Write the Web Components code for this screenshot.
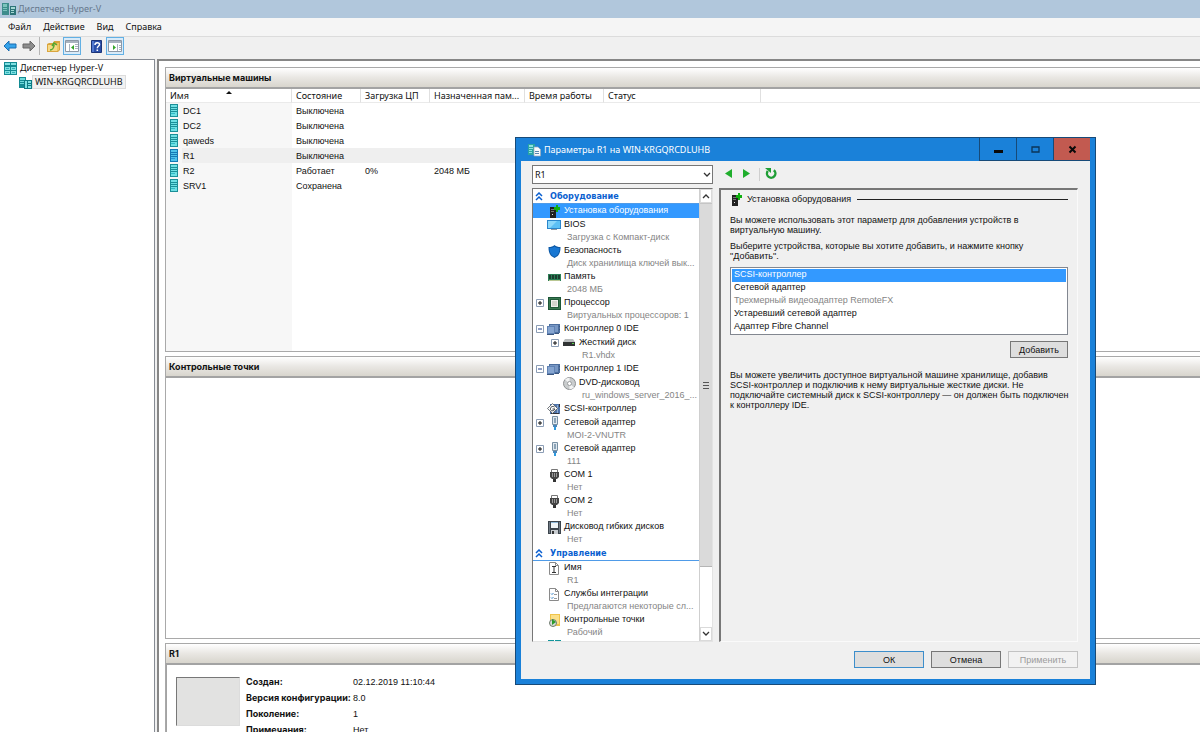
<!DOCTYPE html>
<html lang="ru">
<head>
<meta charset="utf-8">
<title>Диспетчер Hyper-V</title>
<style>
  html, body { margin: 0; height: 100%; background: #fff; }
  body {
    --ui: "Noto Sans", "Open Sans", sans-serif;
    --strong: Inter, "Noto Sans", sans-serif;
    --small: "Liberation Sans", Arial, sans-serif;
    --accent: #1a81d9;
    --select: #3399ff;
    font: 9px/12px var(--ui);
    color: #111;
    overflow: hidden;
  }
</style>
</head>
<body>
<hv-manager></hv-manager>
<script>
const ICONS = {
  app: [16, 14, '<path fill="#3d8c8c" d="M1 1h7v12H1z"/><path fill="#7cc3bd" d="M2 2h4v3H2zM2 6h4v1H2zM2 8h4v1H2z"/><path fill="#2d7377" d="M9 4h6v9H9z"/><path fill="#a5d8d3" d="M10 5h4v2h-4zM10 8h3v1h-3zM10 10h3v1h-3z"/>'],
  console: [13, 13, '<path fill="#138b93" d="M0 0h13v13H0z"/><path fill="#7fe0e2" d="M1 1h5v2H1zM7 1h5v2H7zM1 5h5v3H1zM7 5h5v3H7zM1 9h5v3H1zM7 9h5v3H7z"/><path fill="#2fb2b8" d="M2 6h3v1H2zM8 6h3v1H8zM2 10h3v1H2zM8 10h3v1H8z"/>'],
  host: [13, 13, '<path fill="#138b93" d="M0 1h7v11H0z"/><path fill="#6fd9db" d="M1 2h5v2H1zM1 5h5v1H1zM1 7h5v1H1z"/><path fill="#0e7b84" d="M5 4h8v9H5z"/><path fill="#7fe0e2" d="M6 5h2v7H6zM9 5h3v2H9zM9 8h3v1H9zM9 10h3v2H9z"/>'],
  vm: [8, 13, '<path fill="#1b8f98" d="M0 0h8v13H0z"/><path fill="#6fe0e4" d="M1 1h6v2H1zM1 4h6v1H1zM1 6h6v1H1zM1 8h6v4H1z"/><path fill="#31b9c4" d="M1 9h4v1H1z"/>'],
  vmsel: [8, 13, '<path fill="#1478b4" d="M0 0h8v13H0z"/><path fill="#4ec3ea" d="M1 1h6v2H1zM1 4h6v1H1zM1 6h6v1H1zM1 8h6v4H1z"/><path fill="#2494d4" d="M1 9h4v1H1z"/>'],
  back: [14, 12, '<path fill="#35a3ea" stroke="#1b6cb0" d="M1 6l5-5v3h7v4H6v3z"/>'],
  forward: [14, 12, '<path fill="#8d8d8d" stroke="#666" d="M13 6L8 1v3H1v4h7v3z"/>'],
  folder: [13, 12, '<path fill="#d9a53e" d="M0 4l2-1h4l1-2h6v9l-2 2H0z"/><path fill="#f6d987" d="M1 5h9v6H1z"/><path fill="#edc561" d="M10 3h2v7l-2 1z"/><path fill="none" stroke="#4faa32" stroke-width="1.500" d="M3 10c2 0 4-2 4-5M5 6l2-3 3 2"/>'],
  paneleft: [14, 12, '<path fill="#fff" stroke="#8c98a6" d="M.5.5h13v11H.5z"/><path fill="#a9b3bf" d="M1 1h12v2H1zM4 4h1v7H4zM10 4h3v1h-3zM10 6h3v1h-3zM10 8h3v1h-3z"/><path fill="#35a52a" d="M9 5v5L6 7.500z"/>'],
  paneright: [14, 12, '<path fill="#fff" stroke="#8c98a6" d="M.5.5h13v11H.5z"/><path fill="#a9b3bf" d="M1 1h12v2H1zM9 4h1v7H9zM11 5h2v1h-2zM11 7h2v1h-2zM11 9h2v1h-2z"/><path fill="#35a52a" d="M5 5v5l3-2.500z"/>'],
  help: [11, 13, '<path fill="#2a4ea8" stroke="#1b3479" d="M.5.5h10v12H.5z"/><path fill="#5078cf" d="M1 1h2v11H1z"/><path fill="none" stroke="#fff" stroke-width="1.500" d="M4 5c0-3 4.500-3 4.500-.5C8.500 6 6.300 6 6.300 8.300"/><path fill="#fff" d="M5.500 9.500h1.600V11H5.500z"/>'],
  settings: [13, 14, '<path fill="#2aa5a5" d="M0 1h7v11H0z"/><path fill="#8de2df" d="M1 2h4v2H1zM1 5h4v1H1zM1 7h3v1H1zM1 9h3v1H1z"/><path fill="#f6f9fc" stroke="#9aabba" stroke-width=".7" d="M6 4h4l2.500 2.500V13H6z"/><path fill="#5a86b0" d="M7 8h4v1H7zM7 10h4v1H7z"/>'],
  hardware: [13, 13, '<path fill="#222" d="M2 2h6v11H2z"/><path fill="#777" d="M3 4h3v1H3zM3 6h3v1H3z"/><path fill="#e8e8e8" d="M4 9h1v1H4z"/><path fill="#10b010" d="M8 0h2v2h2v3h-2v2H8V5H6V2h2z"/>'],
  bios: [14, 11, '<path fill="#2a86cc" d="M0 0h14v9H0z"/><path fill="#5cc0f5" d="M1 1h12v7H1z"/><path fill="#8cd8fb" d="M1 1h9L3 8H1z"/><path fill="#8f9aa3" d="M4 9h6v1H4z"/>'],
  shield: [13, 13, '<path fill="#0b57a4" d="M6.500 0C8 1.500 10 2 12.500 2c0 5-.8 8.500-6 11C1.300 10.500.5 7 .5 2 3 2 5 1.500 6.500 0z"/><path fill="#1877d2" d="M6.500 1.500C8 2.600 9.700 3 11.500 3c0 4-.8 6.800-5 8.800C2.300 9.800 1.500 7 1.500 3c1.800 0 3.500-.4 5-1.500z"/>'],
  memory: [13, 9, '<path fill="#2c7e55" d="M0 1h13v7H0z"/><path fill="#1c3d30" d="M1 2h2v4H1zM4 2h2v4H4zM7 2h2v4H7zM10 2h2v4h-2z"/><path fill="#b9c793" d="M1 7h11v1H1z"/>'],
  cpu: [13, 13, '<path fill="#1c5537" d="M0 0h13v13H0z"/><path fill="#39784f" d="M1 1h11v11H1z"/><path fill="#1f5a38" d="M2 2h9v9H2z"/><path fill="#f0f0ec" d="M3 3h7v7H3z"/><path fill="#d3d5cd" d="M4 4h5v5H4z"/>'],
  ide: [14, 12, '<path fill="#4d6f9f" d="M2 1h11v9H2z"/><path fill="#7897c4" d="M3 2h8v7H3z"/><path fill="#5f82b4" d="M0 3h8v8H0z"/><path fill="#86a5d0" d="M1 4h6v6H1z"/><path fill="#3a567f" d="M8 10h4v1H8zM12 3h1v1h-1zM12 6h1v1h-1zM0 11h7v1H0z"/>'],
  hdd: [12, 8, '<path fill="#b9bcbd" d="M2 0h8l2 3H0z"/><path fill="#303334" d="M0 3h12v4H0z"/><path fill="#56d04b" d="M9 4h2v1H9z"/>'],
  dvd: [13, 13, '<circle cx="6.500" cy="6.500" r="6" fill="#c9cccd" stroke="#8e9192"/><path fill="#f3f4f4" d="M6.500 6.500L2 2.500A6 6 0 0 1 6.500.8zM6.500 6.500L11 10.500a6 6 0 0 1-4.500 1.700z"/><circle cx="6.500" cy="6.500" r="2" fill="#fff" stroke="#9b9e9f"/>'],
  scsi: [14, 12, '<path fill="#4f74ab" d="M3 1h10v10H3z"/><path fill="#8faed4" d="M10 2h1v8h-1z"/><path fill="#30343a" d="M12 1h1v3h-1zM4 10h8v1H4z"/><path fill="#fff" stroke="#4a5058" stroke-width=".8" d="M5.500.6l5 4.900-5 4.900-5-4.900z"/><path fill="none" stroke="#33383e" d="M7.500 4C5 2.500 3 4.500 3.500 6.500S7 8 8 6H5.500"/>'],
  net: [9, 14, '<path fill="#dfe8ef" stroke="#7890a4" d="M2.500.5h5v8h-5z"/><path fill="#8ba3b7" d="M4 2h2v5H4z"/><path fill="#4b86b8" d="M3 9h4v2H3z"/><path fill="#2d9ae0" d="M4 11h2v3H4z"/>'],
  com: [11, 13, '<path fill="#fff" stroke="#777" d="M2.500.5h6v3h-6z"/><path fill="#444" d="M1 3h9v5l-2 2H3L1 8z"/><path fill="#999" d="M3 4h1v4H3zM5 4h1v4H5zM7 4h1v4H7z"/><path fill="#333" d="M4 10h3v3H4z"/>'],
  floppy: [13, 13, '<path fill="#3c444c" d="M0 0h13v13H0z"/><path fill="#707a84" d="M1 1h1v11H1zM11 1h1v11h-1z"/><path fill="#eef3f6" d="M3 1h7v6H3z"/><path fill="#8fb8d8" d="M3 1h7v1H3z"/><path fill="#c8ccd0" d="M3 9h7v4H3z"/><path fill="#333" d="M4 10h2v3H4z"/>'],
  name: [10, 13, '<path fill="#fff" stroke="#8a8a8a" d="M.5.5h6l3 3v9h-9z"/><path fill="none" stroke="#8a8a8a" d="M6.500.5v3h3"/><path fill="none" stroke="#333" d="M3 4.500h4M3 10.500h4M5 4.500v6"/>'],
  services: [10, 13, '<path fill="#fff" stroke="#8a8a8a" d="M.5.5h6l3 3v9h-9z"/><path fill="none" stroke="#8a8a8a" d="M6.500.5v3h3"/><path fill="none" stroke="#3a86c8" d="M2 5.500l1 1L4.500 5M2 9.500l1 1L4.500 9"/><path fill="#999" d="M5 6h3v1H5zM5 10h3v1H5z"/>'],
  checkpoint: [12, 13, '<path fill="#f0c44a" d="M2 0h10v12H2z"/><path fill="#fbe08a" d="M3 1h8v9H3z"/><circle cx="5" cy="9" r="3.500" fill="#d8dcd8" stroke="#6e7a6e"/><path fill="#2b9b2b" d="M4 5l4 3-4 3z"/>'],
  paging: [13, 13, '<path fill="#12959b" d="M0 0h6v12H0zM7 0h6v12H7z"/><path fill="#7fe0e2" d="M1 3h4v2H1zM8 3h4v2H8z"/>'],
  prev: [8, 9, '<path fill="#1fae2c" d="M7 0v9L0 4.500z"/>'],
  next: [8, 9, '<path fill="#1fae2c" d="M1 0v9l7-4.500z"/>'],
  refresh: [12, 12, '<path fill="none" stroke="#1f9e35" stroke-width="2.400" d="M2.800 4A4.200 4.200 0 1 0 8.800 3.200"/><path fill="#1f9e35" d="M0 1h6v5z"/>'],
  chevdown: [8, 6, '<path fill="none" stroke="#333" stroke-width="1.300" d="M1 1l3 3 3-3"/>'],
  chevup: [8, 6, '<path fill="none" stroke="#333" stroke-width="1.300" d="M1 5l3-3 3 3"/>'],
  collapse: [8, 9, '<path fill="none" stroke="#0a5fd0" stroke-width="1.500" d="M1 4l3-3 3 3M1 8l3-3 3 3"/>'],
  plus: [8, 8, '<path fill="#fff" stroke="#8b9db5" d="M.5.5h7v7h-7z"/><path fill="#111" d="M2 3.500h4v1H2zM3.500 2h1v4h-1z"/>'],
  minus: [8, 8, '<path fill="#fff" stroke="#8b9db5" d="M.5.5h7v7h-7z"/><path fill="#1c3d8a" d="M2 3.500h4v1H2z"/>'],
  min: [9, 9, '<path fill="#0a0a0a" d="M0 5h9v3H0z"/>'],
  max: [9, 9, '<path fill="none" stroke="#0b3558" stroke-width="1.300" d="M1 2h7v5H1z"/>'],
  close: [9, 9, '<path fill="none" stroke="#0a0a0a" stroke-width="2" d="M1.500 1.500l6 6M7.500 1.500l-6 6"/>'],
  sort: [6, 3, '<path fill="#111" d="M3 0l3 3H0z"/>']
};

const define = (name, css, html, setup) => {
  const tpl = document.createElement('template');
  tpl.innerHTML = `<style>*{box-sizing:border-box}${css}</style>${html}`;
  customElements.define(name, class extends HTMLElement {
    constructor() {
      super();
      this.attachShadow({ mode: 'open' }).append(tpl.content.cloneNode(true));
    }
    connectedCallback() {
      if (setup && !this.ready) { this.ready = true; setup(this, this.shadowRoot); }
    }
  });
};

define('hv-icon', `:host{display:inline-block;flex:none;line-height:0} svg{display:block}`, `<span></span>`, (el, root) => {
  const [w, h, body] = ICONS[el.getAttribute('name')];
  root.querySelector('span').innerHTML = `<svg width="${w}" height="${h}" viewBox="0 0 ${w} ${h}" aria-hidden="true">${body}</svg>`;
});

define('hv-titlebar', `
  :host{display:flex;align-items:center;gap:1px;height:18px;padding-left:1px;background:#b1c7dc;color:#66788c}`,
  `<hv-icon name="app"></hv-icon><slot></slot>`);

define('hv-menubar', `
  :host{display:block;background:#f5f5f5;border-bottom:1px solid #dcdcdc}
  nav{display:flex;gap:12px;height:18px;padding-left:8px;align-items:center}
  button{all:unset;line-height:12px}`,
  `<nav><button>Файл</button><button>Действие</button><button>Вид</button><button>Справка</button></nav>`);

define('hv-toolbar', `
  :host{display:flex;align-items:flex-start;height:22px;padding-left:1px;gap:1px;background:#f0f0f0}
  button{all:unset;display:grid;place-items:center;width:18px;height:18px}
  button[aria-pressed]{background:#d9ebf9;box-shadow:inset 0 0 0 1px #62b0e4}
  i{width:1px;height:18px;background:#b5b5b5;margin-right:3px}
  .gap{margin-left:5px}`,
  `<button aria-label="Назад"><hv-icon name="back"></hv-icon></button>
   <button aria-label="Вперед"><hv-icon name="forward"></hv-icon></button><i></i>
   <button aria-label="Вверх"><hv-icon name="folder"></hv-icon></button>
   <button aria-label="Дерево консоли" aria-pressed="true"><hv-icon name="paneleft"></hv-icon></button>
   <button aria-label="Справка" class="gap"><hv-icon name="help"></hv-icon></button>
   <button aria-label="Действия" aria-pressed="true"><hv-icon name="paneright"></hv-icon></button>`);

define('hv-console-tree', `
  :host{display:block;background:#fff;border:1px solid #868b93;border-left:0;border-bottom:0;padding:1px 0 0 4px}
  ul{list-style:none;margin:0;padding:0}
  li{display:flex;align-items:center;gap:3px;height:14px}
  .child{padding-left:15px;gap:0}
  .child span{background:#f2f2f2;border:1px solid #dcdcdc;padding:0 2px}`,
  `<ul role="tree">
    <li role="treeitem"><hv-icon name="console"></hv-icon><span>Диспетчер Hyper-V</span></li>
    <li role="treeitem" class="child"><hv-icon name="host"></hv-icon><span>WIN-KRGQRCDLUHB</span></li>
  </ul>`);

define('hv-panel', `
  :host{display:flex;flex-direction:column;min-height:0;border:1px solid #a9a9a9;border-right:0;background:#fff}
  :host([last]){border-bottom:0}
  h2{flex:none;margin:0;height:21px;padding-left:3px;font:bold 9px/20px var(--strong);color:#111;
     background:linear-gradient(#fff,#e9e7e3 50%,#d8d5cd);border-bottom:2px solid #a3a3a3}
  div{flex:1;min-height:0;overflow:hidden}`,
  `<h2></h2><div><slot></slot></div>`,
  (el, root) => { root.querySelector('h2').textContent = el.getAttribute('heading'); });

define('hv-vm-table', `
  :host{display:block;height:100%;background:linear-gradient(#f7f7f7,#f7f7f7) 0 0/126px 100% no-repeat}
  table{width:100%;table-layout:fixed;border-spacing:0}
  th{position:relative;height:14px;padding:0 4px;font-weight:normal;line-height:13px;text-align:left;white-space:nowrap;
     background:#fff;border-right:1px solid #e0e0e0;border-bottom:1px solid #eaeaea}
  th:last-child{border-right:0}
  th hv-icon{position:absolute;left:60px;top:2px}
  td{height:15px;padding:0 4px;line-height:12px;white-space:nowrap;font-family:var(--small)}
  td span{display:flex;align-items:center;gap:5px}
  tr[aria-selected] td{background:#efefef}
  tr[aria-selected] td:first-child{background:linear-gradient(90deg,#f7f7f7 16px,#efefef 16px)}
  tr[aria-selected] td:last-child{background:none}`,
  `<table>
    <colgroup><col style="width:126px"><col style="width:69px"><col style="width:69px"><col style="width:95px"><col style="width:79px"><col style="width:157px"><col></colgroup>
    <thead><tr><th>Имя<hv-icon name="sort"></hv-icon></th><th>Состояние</th><th>Загрузка ЦП</th><th>Назначенная пам...</th><th>Время работы</th><th>Статус</th><th></th></tr></thead>
    <tbody></tbody></table>`,
  (el, root) => {
    const rows = [['DC1', 'Выключена'], ['DC2', 'Выключена'], ['qaweds', 'Выключена'], ['R1', 'Выключена'], ['R2', 'Работает', '0%', '2048 МБ'], ['SRV1', 'Сохранена']];
    root.querySelector('tbody').innerHTML = rows.map(r => {
      const sel = r[0] === 'R1';
      return `<tr${sel ? ' aria-selected="true"' : ''}><td><span><hv-icon name="${sel ? 'vmsel' : 'vm'}"></hv-icon>${r[0]}</span></td>` +
        [1, 2, 3, 4, 5, 6].map(i => `<td>${r[i] || ''}</td>`).join('') + '</tr>';
    }).join('');
  });

define('hv-vm-details', `
  :host{display:flex;gap:6px;padding:12px 0 0 9px;border-left:1px solid #a3a3a3}
  .thumb{width:64px;height:49px;flex:none;background:#e2e2e1;border:1px solid #dcdcdc;border-top-color:#777;border-left-color:#777}
  dl{margin:-3px 0 0;display:grid;grid-template-columns:107px auto;grid-auto-rows:16px;line-height:16px}
  dt{font-family:var(--strong);font-weight:bold;white-space:nowrap} dd{margin:0;font-family:var(--small)}`,
  `<div class="thumb"></div><dl>
    <dt>Создан:</dt><dd>02.12.2019 11:10:44</dd><dt>Версия конфигурации:</dt><dd>8.0</dd>
    <dt>Поколение:</dt><dd>1</dd><dt>Примечания:</dt><dd>Нет</dd></dl>`);

define('hv-scrollbar', `
  :host{display:flex;flex-direction:column;width:13px;background:#fff;border-left:1px solid #cfcfcf}
  button{all:unset;display:grid;place-items:center;height:14px;flex:none;box-shadow:inset 0 0 0 1px #dadada}
  .thumb{flex:365;background:#dadada;border-bottom:1px solid #b5b5b5;border-top:1px solid #c5c5c5;display:grid;place-items:center}
  .thumb i{width:6px;height:7px;background:repeating-linear-gradient(#555 0 1px,transparent 1px 3px)}
  .rest{flex:60}`,
  `<button aria-label="Вверх"><hv-icon name="chevup"></hv-icon></button><div class="thumb"><i></i></div><div class="rest"></div>
   <button aria-label="Вниз"><hv-icon name="chevdown"></hv-icon></button>`);

define('hv-section', `
  :host{display:flex;align-items:center;gap:7px;height:15px;padding-left:2px;border-bottom:1px solid #4f9be8;
    font:bold 9px/14px "DejaVu Sans Condensed","DejaVu Sans",sans-serif;color:#0a5fd0}`,
  `<hv-icon name="collapse"></hv-icon><slot></slot>`);

define('hv-setting', `
  :host{display:block;padding-left:3px;white-space:nowrap}
  :host([level="2"]){padding-left:18px}
  :host([selected]){background:var(--select);color:#fff}
  .row{display:grid;grid-template-columns:8px 14px auto;column-gap:3px;align-items:center;height:14px}
  .exp,.ico{line-height:0}
  .ico{justify-self:center}
  .text{align-self:start;line-height:13px}
  button{all:unset;display:block;height:8px}
  .sub{display:none;height:12px;line-height:11px;padding-left:31px;color:#858585;overflow:hidden}
  :host([note]) .sub{display:block}`,
  `<div class="row"><span class="exp"></span><span class="ico"></span><span class="text"><slot></slot></span></div><div class="sub"></div>`,
  (el, root) => {
    const e = el.getAttribute('expander');
    if (e) root.querySelector('.exp').innerHTML = `<button aria-label="${e === 'plus' ? 'Развернуть' : 'Свернуть'}"><hv-icon name="${e}"></hv-icon></button>`;
    root.querySelector('.ico').innerHTML = `<hv-icon name="${el.getAttribute('icon')}"></hv-icon>`;
    root.querySelector('.sub').textContent = el.getAttribute('note') || '';
  });

define('hv-settings-tree', `
  :host{display:flex;min-height:0;background:#fff;border:1px solid #777;border-right-color:#e3e3e3;border-bottom-color:#e3e3e3}
  .list{flex:1;min-width:0;overflow:hidden}`,
  `<div class="list">
    <hv-section>Оборудование</hv-section>
    <hv-setting icon="hardware" selected>Установка оборудования</hv-setting>
    <hv-setting icon="bios" note="Загрузка с Компакт-диск">BIOS</hv-setting>
    <hv-setting icon="shield" note="Диск хранилища ключей вык...">Безопасность</hv-setting>
    <hv-setting icon="memory" note="2048 МБ">Память</hv-setting>
    <hv-setting icon="cpu" expander="plus" note="Виртуальных процессоров: 1">Процессор</hv-setting>
    <hv-setting icon="ide" expander="minus">Контроллер 0 IDE</hv-setting>
    <hv-setting icon="hdd" level="2" expander="plus" note="R1.vhdx">Жесткий диск</hv-setting>
    <hv-setting icon="ide" expander="minus">Контроллер 1 IDE</hv-setting>
    <hv-setting icon="dvd" level="2" note="ru_windows_server_2016_...">DVD-дисковод</hv-setting>
    <hv-setting icon="scsi">SCSI-контроллер</hv-setting>
    <hv-setting icon="net" expander="plus" note="MOI-2-VNUTR">Сетевой адаптер</hv-setting>
    <hv-setting icon="net" expander="plus" note="111">Сетевой адаптер</hv-setting>
    <hv-setting icon="com" note="Нет">COM 1</hv-setting>
    <hv-setting icon="com" note="Нет">COM 2</hv-setting>
    <hv-setting icon="floppy" note="Нет">Дисковод гибких дисков</hv-setting>
    <hv-section>Управление</hv-section>
    <hv-setting icon="name" note="R1">Имя</hv-setting>
    <hv-setting icon="services" note="Предлагаются некоторые сл...">Службы интеграции</hv-setting>
    <hv-setting icon="checkpoint" note="Рабочий">Контрольные точки</hv-setting>
    <hv-setting icon="paging"></hv-setting>
  </div><hv-scrollbar></hv-scrollbar>`);

const BUTTON = `button{font:9px/12px var(--small);color:#111;height:17px;padding:0;border:1px solid #777;border-radius:0;background:#dedede}`;

define('hv-add-hardware', `
  :host{display:block;min-width:0;padding:2px 9px 0;border:1px solid #777;border-width:2px 1px 1px 2px;border-right-color:#fafafa;border-bottom-color:#fafafa}
  h3{display:flex;align-items:center;gap:4px;margin:0 0 9px;font:inherit;height:14px}
  h3 i{flex:1;height:1px;background:#222;margin-left:2px}
  p{margin:0 0 6px;line-height:10px;white-space:nowrap}
  select{display:block;width:100%;height:68px;margin:0 0 6px;padding:1px;border:1px solid #828790;border-radius:0;background:#fff;
    font:9px/13px var(--small);color:#111;overflow:hidden;outline:0}
  option{height:13px;min-height:13px;padding:0 2px;line-height:13px;font-size:9px}
  option:checked{background-image:linear-gradient(#3399ff,#3399ff);-webkit-text-fill-color:#fff}
  option:disabled{color:#858585}
  ${BUTTON}
  button{display:block;width:58px;margin:0 0 12px auto}`,
  `<h3><hv-icon name="hardware"></hv-icon>Установка оборудования<i></i></h3>
   <p>Вы можете использовать этот параметр для добавления устройств в<br>виртуальную машину.</p>
   <p><label for="devices">Выберите устройства, которые вы хотите добавить, и нажмите кнопку<br>"Добавить".</label></p>
   <select id="devices" size="5"><option selected>SCSI-контроллер</option><option>Сетевой адаптер</option><option disabled>Трехмерный видеоадаптер RemoteFX</option><option>Устаревший сетевой адаптер</option><option>Адаптер Fibre Channel</option></select>
   <button>Добавить</button>
   <p>Вы можете увеличить доступное виртуальной машине хранилище, добавив<br>SCSI-контроллер и подключив к нему виртуальные жесткие диски. Не<br>подключайте системный диск к SCSI-контроллеру — он должен быть подключен<br>к контроллеру IDE.</p>`);

define('hv-settings-dialog', `
  :host{display:flex;flex-direction:column;background:var(--accent);border:1px solid #174a78;padding:0 5px 5px;font:9px/12px var(--small)}
  header{display:flex;align-items:center;gap:3px;height:23px;padding-left:7px;color:#fff;font-family:var(--ui);flex:none}
  header span{flex:1}
  header nav{display:flex;align-self:stretch}
  header button{all:unset;box-sizing:border-box;display:grid;place-items:center;width:37px;border-left:1px solid #174a78;border-bottom:1px solid #174a78}
  header button:last-child{background:#c25a50}
  .client{flex:1;min-height:0;display:grid;grid-template-columns:181px 1fr;grid-template-rows:19px 1fr 22px;column-gap:6px;row-gap:4px;
    padding:4px 12px 11px 11px;background:#f0f0f0}
  .combo{position:relative;display:block}
  .combo hv-icon{position:absolute;right:2px;top:7px;pointer-events:none}
  select{width:100%;height:19px;appearance:none;border:1px solid #777;border-radius:0;background:#fff;padding:0 2px;font:9px/12px var(--ui);color:#111}
  .tools{display:flex;align-items:center;gap:5px;padding-left:6px}
  .tools button{all:unset;display:block}
  .tools .step{margin-right:4px}
  .tools i{width:1px;height:13px;background:#cfcfcf}
  footer{grid-column:1/-1;display:flex;justify-content:flex-end;gap:7px;padding-top:5px}
  ${BUTTON}
  footer button{width:70px}
  footer button:first-child{border-color:#3d8ecb}
  footer button:disabled{color:#9c9c9c;border-color:#c3c3c3;background:#f2f2f2}`,
  `<header><hv-icon name="settings"></hv-icon><span>Параметры R1 на WIN-KRGQRCDLUHB</span>
     <nav><button aria-label="Свернуть"><hv-icon name="min"></hv-icon></button><button aria-label="Развернуть"><hv-icon name="max"></hv-icon></button><button aria-label="Закрыть"><hv-icon name="close"></hv-icon></button></nav></header>
   <div class="client">
     <label class="combo"><select aria-label="Виртуальная машина"><option>R1</option></select><hv-icon name="chevdown"></hv-icon></label>
     <div class="tools"><button class="step" aria-label="Предыдущая"><hv-icon name="prev"></hv-icon></button><button class="step" aria-label="Следующая"><hv-icon name="next"></hv-icon></button><i></i><button aria-label="Обновить"><hv-icon name="refresh"></hv-icon></button></div>
     <hv-settings-tree></hv-settings-tree>
     <hv-add-hardware></hv-add-hardware>
     <footer><button>ОК</button><button>Отмена</button><button disabled>Применить</button></footer>
   </div>`);

define('hv-manager', `
  :host{display:flex;flex-direction:column;height:100vh;background:#f0f0f0;overflow:hidden}
  .body{flex:1;min-height:0;display:grid;grid-template-columns:155px 1fr;column-gap:2px}
  main{min-width:0;min-height:0;display:grid;grid-template-rows:101fr 100fr 89px;row-gap:4px;padding:6px 0 0 6px;background:#fff;
    border-left:2px solid #868686;border-top:2px solid #868686}
  hv-settings-dialog{position:absolute;left:515px;top:137px;width:581px;height:548px}`,
  `<hv-titlebar>Диспетчер Hyper-V</hv-titlebar>
   <hv-menubar></hv-menubar>
   <hv-toolbar></hv-toolbar>
   <div class="body">
     <hv-console-tree></hv-console-tree>
     <main>
       <hv-panel heading="Виртуальные машины"><hv-vm-table></hv-vm-table></hv-panel>
       <hv-panel heading="Контрольные точки"></hv-panel>
       <hv-panel heading="R1" last><hv-vm-details></hv-vm-details></hv-panel>
     </main>
   </div>
   <hv-settings-dialog role="dialog" aria-label="Параметры R1"></hv-settings-dialog>`);
</script>
</body>
</html>
